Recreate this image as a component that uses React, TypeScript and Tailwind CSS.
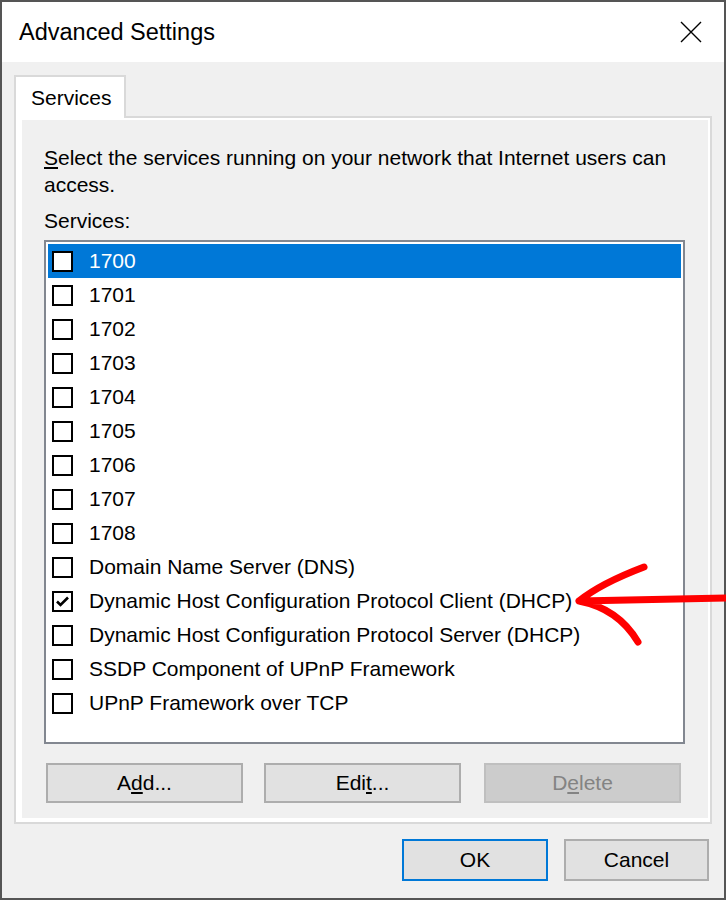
import React from "react";

const SERVICES = [
  "1700",
  "1701",
  "1702",
  "1703",
  "1704",
  "1705",
  "1706",
  "1707",
  "1708",
  "Domain Name Server (DNS)",
  "Dynamic Host Configuration Protocol Client (DHCP)",
  "Dynamic Host Configuration Protocol Server (DHCP)",
  "SSDP Component of UPnP Framework",
  "UPnP Framework over TCP",
];

function CheckBox({ checked }: { checked: boolean }) {
  return (
    <div className="flex h-[21px] w-[21px] shrink-0 items-center justify-center border-2 border-black bg-white">
      {checked && (
        <svg width="15" height="15" viewBox="0 0 15 15">
          <path d="M2 7.5 L5.5 11 L13 3.5" fill="none" stroke="#000" strokeWidth="2.6" />
        </svg>
      )}
    </div>
  );
}

function DialogButton({
  children,
  disabled,
  className = "",
}: {
  children: React.ReactNode;
  disabled?: boolean;
  className?: string;
}) {
  return (
    <button
      className={`flex h-[40px] w-[197px] items-center justify-center border-2 text-[21px] ${
        disabled
          ? "border-[#bfbfbf] bg-[#cccccc] text-[#838383]"
          : "border-[#adadad] bg-[#e1e1e1] text-black"
      } ${className}`}
    >
      {children}
    </button>
  );
}

export default function App() {
  return (
    <div className="relative flex h-[900px] w-[726px] flex-col border-2 border-[#555555] bg-[#f0f0f0] font-['Liberation_Sans',Arial,sans-serif] text-black">
      {/* title bar */}
      <div className="flex h-[60px] shrink-0 items-center justify-between bg-white pl-[17px] pr-[22px]">
        <span className="pt-[2px] text-[23.5px]">Advanced Settings</span>
        <svg width="22" height="22" viewBox="0 0 22 22">
          <path d="M1 1 L21 21 M21 1 L1 21" stroke="#000" strokeWidth="1.4" />
        </svg>
      </div>

      {/* tab + page */}
      <div className="flex flex-col px-[12px] pt-[13px]">
        <div className="relative z-10 -mb-[2px] flex h-[43px] w-[112px] items-center border-2 border-b-0 border-[#d9d9d9] bg-white pl-[15px] text-[21px]">
          Services
        </div>
        <div className="border-2 border-[#d9d9d9] bg-white pb-[4px] pl-[6px] pr-[2px] pt-[2px]">
          <div className="flex h-[698px] flex-col bg-[#f0f0f0] pl-[22px] pr-[23px] pt-[24px]">
            <p className="text-[21px] leading-[27px]">
              <u className="underline-offset-2">S</u>elect the services running on your network that Internet users can access.
            </p>
            <p className="mt-[11px] text-[21px] leading-[24px]">Services:</p>
            <div className="mt-[7px] h-[504px] border-2 border-[#828790] bg-white p-[2px]">
              {SERVICES.map((s, i) => (
                <div
                  key={s}
                  className={`flex h-[34px] items-center gap-[16px] pl-[4px] text-[21px] ${
                    i === 0 ? "bg-[#0078d7] text-white" : ""
                  }`}
                >
                  <CheckBox checked={i === 10} />
                  <span>{s}</span>
                </div>
              ))}
            </div>
            <div className="mt-[19px] flex gap-[21px] pl-[2px]">
              <DialogButton>
                A<u className="underline-offset-2">d</u>d...
              </DialogButton>
              <DialogButton>
                Edi<u className="underline-offset-2">t</u>...
              </DialogButton>
              <DialogButton disabled className="ml-[2px]">
                D<u className="underline-offset-2">e</u>lete
              </DialogButton>
            </div>
          </div>
        </div>
      </div>

      {/* footer */}
      <div className="mt-[15px] flex justify-end gap-[16px] pr-[15px]">
        <button className="flex h-[42px] w-[146px] items-center justify-center border-2 border-[#0078d7] bg-[#e1e1e1] text-[21px]">
          OK
        </button>
        <button className="flex h-[42px] w-[145px] items-center justify-center border-2 border-[#adadad] bg-[#e1e1e1] text-[21px]">
          Cancel
        </button>
      </div>

      {/* red annotation arrow */}
      <svg
        className="pointer-events-none absolute left-[-2px] top-[-2px]"
        width="726"
        height="900"
        viewBox="0 0 726 900"
      >
        <path
          d="M726 598 C690 599 640 600 579 601 M644 567 C615 578 595 588 579 601 C605 606 625 620 638 642"
          fill="none"
          stroke="#ff0000"
          strokeWidth="7"
          strokeLinecap="round"
          strokeLinejoin="round"
        />
      </svg>
    </div>
  );
}
